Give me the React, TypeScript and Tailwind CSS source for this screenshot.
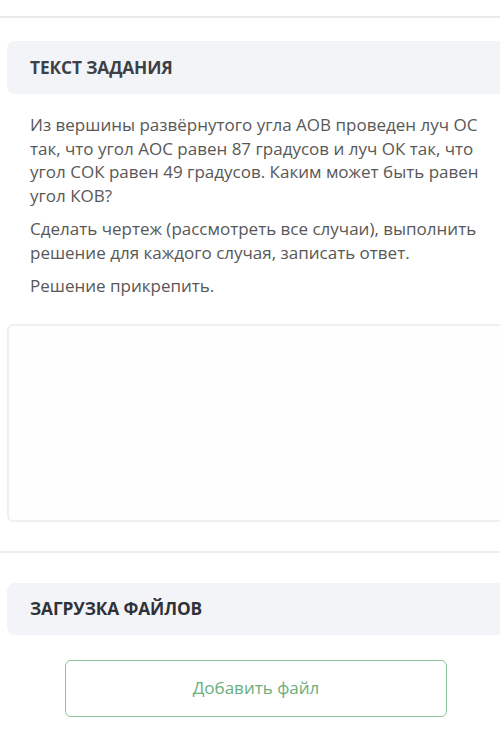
export default function App() {
  return (
    <div
      className="w-[500px] h-[739px] overflow-hidden bg-white"
      style={{ fontFamily: '"Open Sans", "Noto Sans", sans-serif' }}
    >
      <div className="h-[16px]" />
      <div className="h-[2px] bg-[#e9e9ea]" />

      <div className="pl-[7px] pt-[23px]">
        {/* Task header */}
        <div className="w-[520px] h-[53px] rounded-lg bg-[#f3f4f7] flex items-center pl-[23px]">
          <h2 className="text-[17.3px] font-bold text-[#3c4047] tracking-[-0.1px]">
            ТЕКСТ ЗАДАНИЯ
          </h2>
        </div>

        {/* Task text */}
        <div className="pl-[23px] pt-[19px] w-[480px] text-[17px] leading-[23.5px] text-[#585858]">
          <p>
            Из вершины развёрнутого угла АОВ проведен луч ОС так, что угол АОС
            равен 87 градусов и луч ОК так, что угол СОК равен 49 градусов.
            Каким может быть равен угол КОВ?
          </p>
          <p className="mt-[10px]">
            Сделать чертеж (рассмотреть все случаи), выполнить решение для
            каждого случая, записать ответ.
          </p>
          <p className="mt-[10px]">Решение прикрепить.</p>
        </div>

        {/* Answer field */}
        <div className="mt-[26px] w-[520px] h-[198px] rounded-md border-2 border-[#efefef] bg-[#fefefe]" />
      </div>

      <div className="mt-[29px] h-[2px] bg-[#ececec]" />

      <div className="pl-[7px] pt-[30px]">
        {/* Upload header */}
        <div className="w-[520px] h-[52px] rounded-lg bg-[#f3f4f7] flex items-center pl-[23px]">
          <h2 className="text-[17.3px] font-bold text-[#2f3238] tracking-[-0.1px]">
            ЗАГРУЗКА ФАЙЛОВ
          </h2>
        </div>

        <div className="pl-[58px] pt-[25px]">
          <button className="w-[382px] h-[57px] rounded-md border-[1.5px] border-[#8cc49a] bg-white text-[17px] text-[#6aae7c] flex items-center justify-center">
            Добавить файл
          </button>
        </div>
      </div>
    </div>
  );
}
